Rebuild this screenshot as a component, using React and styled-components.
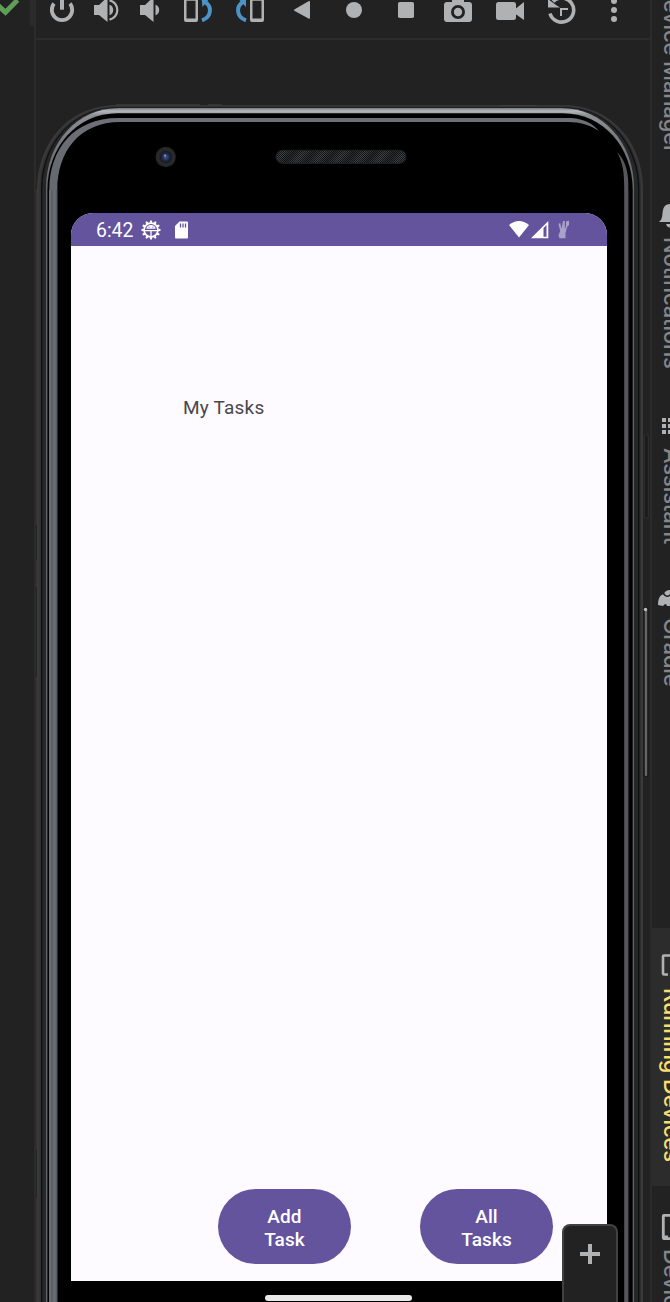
import React from "react";
import styled, { createGlobalStyle } from "styled-components";

const Global = createGlobalStyle`
  * { box-sizing: border-box; }
  html, body { margin: 0; background: #222; overflow: hidden; }
  svg { display: block; }
`;

const Page = styled.div`
  display: flex;
  width: 670px;
  height: 1302px;
  overflow: hidden;
  background: #222222;
`;
const LeftRail = styled.div`
  flex: 0 0 36px;
  border-right: 2px solid #2b2b2b;
`;
const RailTop = styled.div`
  height: 26px;
  border-right: 4px solid #2b2b2b;
`;
const Main = styled.main`
  flex: 0 0 614px;
  display: flex;
  flex-direction: column;
`;
const Toolbar = styled.div`
  display: flex;
  flex: 0 0 40px;
  border-bottom: 2px solid #2c2c2c;
  color: #afb1b3;
`;
const ToolButton = styled.div`
  flex: 0 0 ${(p) => p.$w}px;
  display: flex;
  justify-content: center;
`;
const Device = styled.section`
  position: relative;
  flex: 1;
  padding: 173px 43px 0 35px;
`;
const Frame = styled.svg`
  position: absolute;
  left: -2px;
  top: 0;
`;
const Screen = styled.div`
  position: relative;
  display: flex;
  flex-direction: column;
  width: 536px;
  height: 1068px;
  border-radius: 22px 22px 0 0;
  overflow: hidden;
  background: #fdfbff;
  font-family: Roboto, sans-serif;
`;
const StatusBar = styled.div`
  display: flex;
  align-items: center;
  flex: 0 0 33px;
  height: 33px;
  padding: 0 35px 0 25px;
  background: #64549d;
  color: #fff;
`;
const Clock = styled.span`
  font-size: 19.4px;
  line-height: 30px;
  padding-top: 3px;
  width: 45px;
`;
const StatusRight = styled.div`
  display: flex;
  margin-left: auto;
  gap: 2px;
`;
const Content = styled.div`
  flex: 1;
  display: flex;
  flex-direction: column;
  justify-content: space-between;
  padding: 150px 54px 17px 112px;
`;
const Title = styled.div`
  font-size: 19px;
  line-height: 24px;
  letter-spacing: 0.2px;
  color: #49464d;
`;
const Actions = styled.div`
  display: flex;
  gap: 69px;
  padding-left: 35px;
`;
const PillButton = styled.button`
  width: 133px;
  height: 75px;
  padding: 2px 35px 0;
  border: 0;
  border-radius: 38px;
  background: #64549d;
  color: #fff;
  font: 500 19px/23px Roboto, sans-serif;
  letter-spacing: 0.1px;
`;
const HomeBar = styled.div`
  position: relative;
  width: 147px;
  height: 6px;
  margin: 14px 0 0 194px;
  border-radius: 3px;
  background: #e9e9e9;
`;
const ZoomPanel = styled.div`
  position: absolute;
  left: 526px;
  bottom: 0;
  width: 56px;
  height: 78px;
  display: flex;
  justify-content: center;
  padding-top: 18px;
  border: 2px solid #414141;
  border-bottom: 0;
  border-radius: 8px 8px 0 0;
  background: #222;
  color: #afb1b3;
`;
const RightRail = styled.aside`
  flex: 0 0 20px;
  display: flex;
  flex-direction: column;
  overflow: hidden;
  border-left: 2px solid #2b2b2b;
`;
const RailTab = styled.div`
  flex: 0 0 ${(p) => p.$h}px;
  display: flex;
  flex-direction: column;
  width: 40px;
  padding: ${(p) => p.$top || 0}px 0 0 6px;
  background: ${(p) => (p.$active ? "#2c2c2c" : "transparent")};
  color: #afb1b3;
`;
const RailLabel = styled.span`
  writing-mode: vertical-rl;
  width: 28px;
  line-height: 28px;
  margin-top: ${(p) => p.$gap || 0}px;
  margin-left: 0;
  font-family: Inter, sans-serif;
  font-size: 22px;
  font-weight: 500;
  letter-spacing: -0.15px;
  white-space: nowrap;
  color: ${(p) => (p.$active ? "#f9de6f" : "#85858a")};
`;

const Speaker = () => <path d="M-13-5h5L.5-13v25L-8 5h-5z" />;
const Handset = ({ x }) => (
  <path fillRule="evenodd" d={`M${x}-13h14v23a2 2 0 0 1-2 2h-10a2 2 0 0 1-2-2zM${x + 2.5}-9.3v17.8h9v-17.8z`} />
);
const glyphs = {
  power: (
    <>
      <path d="M-8-6.5a10.2 10.2 0 1 0 16 0" fill="none" stroke="currentColor" strokeWidth="3.8" />
      <path d="M-2-12h4V-.3h-4z" />
    </>
  ),
  volumeUp: (
    <>
      <Speaker />
      <path d="M2.5-5.2a5.5 5.5 0 0 1 0 10.4z" />
      <path d="M2.5-9.6a9.8 9.8 0 0 1 0 19.2" fill="none" stroke="currentColor" strokeWidth="2.2" />
    </>
  ),
  volumeDown: (
    <g transform="translate(4 0)">
      <Speaker />
      <path d="M2.5-5.2a5.5 5.5 0 0 1 0 10.4z" />
    </g>
  ),
  rotateLeft: (
    <>
      <Handset x={-14} />
      <g fill="#4c94c8">
        <path d="M3.5-12H12L4.5-3z" />
        <path d="M7-8C14-4 14 7 4 10.3" fill="none" stroke="#4c94c8" strokeWidth="4" />
      </g>
    </>
  ),
  rotateRight: (
    <>
      <Handset x={0} />
      <g fill="#4c94c8">
        <path d="M-4-12h-8.5l8.5 9z" />
        <path d="M-7-8C-14-4-14 7-4 10.3" fill="none" stroke="#4c94c8" strokeWidth="4" />
      </g>
    </>
  ),
  back: <path d="M6.5-8.7q1.5-.8 1.5.8V7.8q0 1.6-1.5.8L-7.7.7q-.8-.7 0-1.3z" />,
  home: <circle r="8" />,
  overview: <rect x="-8" y="-8" width="16" height="16" rx="1.8" />,
  camera: (
    <>
      <path d="M-14-5a3 3 0 0 1 3-3h5v-2l2-2h8l2 2v2h5a3 3 0 0 1 3 3V9a3 3 0 0 1-3 3h-22a3 3 0 0 1-3-3z" />
      <circle cy="2" r="5.6" fill="none" stroke="#222" strokeWidth="2.8" />
    </>
  ),
  video: (
    <>
      <rect x="-14" y="-8" width="20" height="18" rx="2.5" />
      <path d="M4 0L14-8V10L4 3z" />
    </>
  ),
  history: (
    <>
      <path d="M-9-8.5A12.1 12.1 0 1 1-12 3.5" fill="none" stroke="currentColor" strokeWidth="3.6" />
      <path d="M-14-11v8.5h12L-6-5z" />
      <path d="M-1 6V-1h7" fill="none" stroke="currentColor" strokeWidth="2" />
    </>
  ),
  more: (
    <>
      <circle cy="-9" r="3" />
      <circle r="3" />
      <circle cy="9" r="3" />
    </>
  ),
};
const tools = [
  ["power", 52], ["volumeUp", 38], ["volumeDown", 46], ["rotateLeft", 52], ["rotateRight", 52],
  ["back", 52], ["home", 52], ["overview", 52], ["camera", 52], ["video", 52], ["history", 52], ["more", 52],
];

const body = (l, r, t, rx, ry) =>
  `M${l} 1302V${t + ry}C${l} ${t + ry * 0.43} ${l + rx * 0.43} ${t} ${l + rx} ${t}H${r - rx}C${r - rx * 0.43} ${t} ${r} ${t + ry * 0.43} ${r} ${t + ry}V1302z`;

function PhoneFrame() {
  return (
    <Frame width="616" height="1262" viewBox="34 40 616 1262">
      <defs>
        <linearGradient id="rim" x1="0" y1="108" x2="0" y2="195" gradientUnits="userSpaceOnUse">
          <stop offset="0" stopColor="#777a7e" />
          <stop offset=".035" stopColor="#b5b8bc" />
          <stop offset=".08" stopColor="#8d9094" />
          <stop offset=".4" stopColor="#77797b" />
          <stop offset="1" stopColor="#626466" />
        </linearGradient>
        <linearGradient id="edge" x1="49" y1="0" x2="58" y2="0" gradientUnits="userSpaceOnUse">
          <stop offset="0" stopColor="#85878c" />
          <stop offset=".25" stopColor="#5b5e63" />
          <stop offset=".65" stopColor="#697078" />
          <stop offset="1" stopColor="#464b50" />
        </linearGradient>
        <linearGradient id="crown" x1="58" y1="180" x2="100" y2="122" gradientUnits="userSpaceOnUse">
          <stop stopColor="#656a70" />
          <stop offset="1" stopColor="#6e7077" />
        </linearGradient>
        <pattern id="mesh" width="2" height="2" patternUnits="userSpaceOnUse">
          <path d="M0 0h1v1H0zM1 1h1v1H1z" fill="#111314" />
        </pattern>
        <linearGradient id="grille" x1="278" y1="0" x2="290" y2="10" gradientUnits="userSpaceOnUse" spreadMethod="repeat">
          <stop stopColor="#242627" />
          <stop offset=".5" stopColor="#444748" />
          <stop offset="1" stopColor="#242627" />
        </linearGradient>
        <radialGradient id="lens">
          <stop offset="0" stopColor="#465b91" />
          <stop offset=".6" stopColor="#202a4c" />
          <stop offset="1" stopColor="#111522" />
        </radialGradient>
      </defs>
      <path d="M116 105h84M208 105h14M500 105.5h37" stroke="#484747" />
      <path d="M36.5 190V1302" stroke="#343334" />
      <path d="M36.5 525v35M36.5 587v90M36.5 1150v48" stroke="#232525" />
      <path d={body(37, 643, 105.2, 78, 84)} fill="#3a3839" />
      <path d={body(39.5, 641, 106.5, 77, 83)} fill="#302f30" />
      <path d={body(41, 639.5, 107.3, 76, 82)} fill="#101112" />
      <path d={body(42.4, 638, 107.6, 75, 82)} fill="#252728" />
      <path d={body(46, 634, 108, 73, 80)} fill="url(#rim)" />
      <path d={body(47.4, 632.7, 113.3, 70, 77)} fill="#000" />
      <path
        d="M49.3 1302V190C49.3 150 73 118 118 118H160V122H120C80 122 57.3 151 57.3 190V1302z"
        fill="url(#crown)"
      />
      <path d="M49.3 190H57.3V1302H49.3z" fill="url(#edge)" />
      <path d="M150 118H571C585 119 593 124 599 131C590 125 580 122 568 122H150z" fill="#6e7077" />
      <path d="M617 152C624 159 628.3 169 628.3 184V1302H624.2V187C624.2 173 623 163 617 152z" fill="#57565d" />
      <path d="M628.7 190V1302" stroke="#252528" />
      <rect x="276" y="150.3" width="130" height="13" rx="6.5" fill="url(#grille)" stroke="#222425" />
      <rect x="276" y="150.3" width="130" height="13" rx="6.5" fill="url(#mesh)" />
      <circle cx="165.7" cy="157" r="10.2" fill="#252525" />
      <circle cx="165.7" cy="157" r="8" fill="none" stroke="#303030" />
      <circle cx="165.7" cy="157" r="5.8" fill="url(#lens)" />
      <circle cx="165" cy="155.5" r="1" fill="#92a4ce" />
      <rect x="644.3" y="435" width="4" height="83" rx="1" fill="#1b1b1b" stroke="#303030" />
      <rect x="643.5" y="607" width="5" height="170" rx="1.5" fill="#171717" />
      <path d="M646 609V775" stroke="#656666" strokeWidth="2.4" strokeLinecap="round" />
      <circle cx="645.5" cy="609.5" r="1.7" fill="#bbb" />
    </Frame>
  );
}

const teeth = Array.from({ length: 12 }, (_, i) => i * 30);

export default function App() {
  return (
    <>
      <Global />
      <Page>
        <LeftRail>
          <RailTop>
            <svg width="24" height="20" viewBox="0 0 24 20">
              <path d="M-3 4.5L5.5 12.3 17.5 0" fill="none" stroke="#5f9e59" strokeWidth="5" />
            </svg>
          </RailTop>
        </LeftRail>
        <Main>
          <Toolbar>
            {tools.map(([name, w]) => (
              <ToolButton key={name} $w={w}>
                <svg width="32" height="30" viewBox="-16 -10 32 30" fill="currentColor">{glyphs[name]}</svg>
              </ToolButton>
            ))}
          </Toolbar>
          <Device>
            <PhoneFrame />
            <Screen>
              <StatusBar>
                <Clock>6:42</Clock>
                <svg width="20" height="20" viewBox="-10 -10 20 20">
                  {teeth.map((a) => (
                    <path key={a} d="M-1.4-7.2L-.8-9.6H.8l.6 2.4z" fill="#fff" transform={`rotate(${a})`} />
                  ))}
                  <circle r="6.9" fill="none" stroke="#fff" strokeWidth="1.6" />
                  <path d="M-4.6-1.2a4.6 3.8 0 0 1 9.2 0z" fill="#fff" />
                  <path d="M-6 .7H6M0 1v6" stroke="#fff" strokeWidth="1.3" />
                  <path d="M-2.4-2.8h1M1.4-2.8h1" stroke="#64549d" />
                </svg>
                <svg width="34" height="20" viewBox="0 0 34 20">
                  <path d="M18.5 1.5H26q1 0 1 1v15q0 1-1 1H15q-1 0-1-1V6z" fill="#fff" />
                  <path d="M19.5 3.5v4M22 3.5v4M24.5 3.5v4" stroke="#64549d" strokeWidth="1.3" />
                </svg>
                <StatusRight>
                  <svg width="20" height="20" viewBox="0 0 20 20"><path d="M0 5Q10-3 20 5L10 17.5z" fill="#fff" /></svg>
                  <svg width="18" height="20" viewBox="0 0 18 20">
                    <path d="M0 18.3L17.3 1v17.3z" fill="#fff" />
                    <path d="M12.5 8L15.5 5V16.7h-3z" fill="#64549d" />
                  </svg>
                  <svg width="21" height="20" viewBox="0 0 21 20" fill="#aba2cc">
                    <path d="M7.5 4L9.2 3l1.3 6L12 1h1.8V9l1.2-3V1.5L18 .8V5l-2 2-1.5 6v5.3h-6L7.5 15l1.7-4z" />
                  </svg>
                </StatusRight>
              </StatusBar>
              <Content>
                <Title>My Tasks</Title>
                <Actions>
                  <PillButton>Add<br />Task</PillButton>
                  <PillButton>All<br />Tasks</PillButton>
                </Actions>
              </Content>
            </Screen>
            <HomeBar />
            <ZoomPanel>
              <svg width="20" height="20" viewBox="0 0 20 20"><path d="M10 0v20M0 10h20" stroke="currentColor" strokeWidth="4" /></svg>
            </ZoomPanel>
          </Device>
        </Main>
        <RightRail>
          <RailTab $h={203}><RailLabel $gap={-16}>Device Manager</RailLabel></RailTab>
          <RailTab $h={212}>
            <svg width="28" height="28" viewBox="0 0 28 28" fill="currentColor">
              <path d="M1 19c4-3 3-8 4-12C6 3 8 1 13 1s8 2 9 6c1 4 0 9 4 12zM8 21h11c-1 5-10 5-11 0z" />
            </svg>
            <RailLabel $gap={6}>Notifications</RailLabel>
          </RailTab>
          <RailTab $h={173} $top={3}>
            <svg width="28" height="18" viewBox="0 0 28 18" fill="currentColor">
              {[0, 6, 12].map((y) => [4, 10, 16].map((x) => <rect key={`${x}-${y}`} x={x} y={y} width="4" height="4" />))}
            </svg>
            <RailLabel $gap={12}>Assistant</RailLabel>
          </RailTab>
          <RailTab $h={340} $top={2}>
            <svg width="28" height="18" viewBox="0 0 28 18" fill="currentColor">
              <path d="M0 15C0 8 2 5 6 4C7 0 13-1 17 1l6 6v9h-5q-2-5-4 0H9q-1-4-4 0z" />
              <path d="M5 3q4 6 8 1l3-1" fill="none" stroke="#222" strokeWidth="1.5" />
            </svg>
            <RailLabel $gap={10}>Gradle</RailLabel>
          </RailTab>
          <RailTab $h={258} $top={26} $active>
            <svg width="28" height="22" viewBox="0 0 28 22"><path d="M30 1.5H6q-1 0-1 1v17q0 1 1 1h4" fill="none" stroke="#afb1b3" strokeWidth="2.6" /></svg>
            <RailLabel $gap={12} $active>Running Devices</RailLabel>
          </RailTab>
          <RailTab $h={116} $top={28}>
            <svg width="28" height="26" viewBox="0 0 28 26"><path d="M30 1.3H6.5q-1.2 0-1.2 1.2v21q0 1.2 1.2 1.2H30M5 23h5" fill="none" stroke="#afb1b3" strokeWidth="2.8" /></svg>
            <RailLabel $gap={9}>Device File Explorer</RailLabel>
          </RailTab>
        </RightRail>
      </Page>
    </>
  );
}
